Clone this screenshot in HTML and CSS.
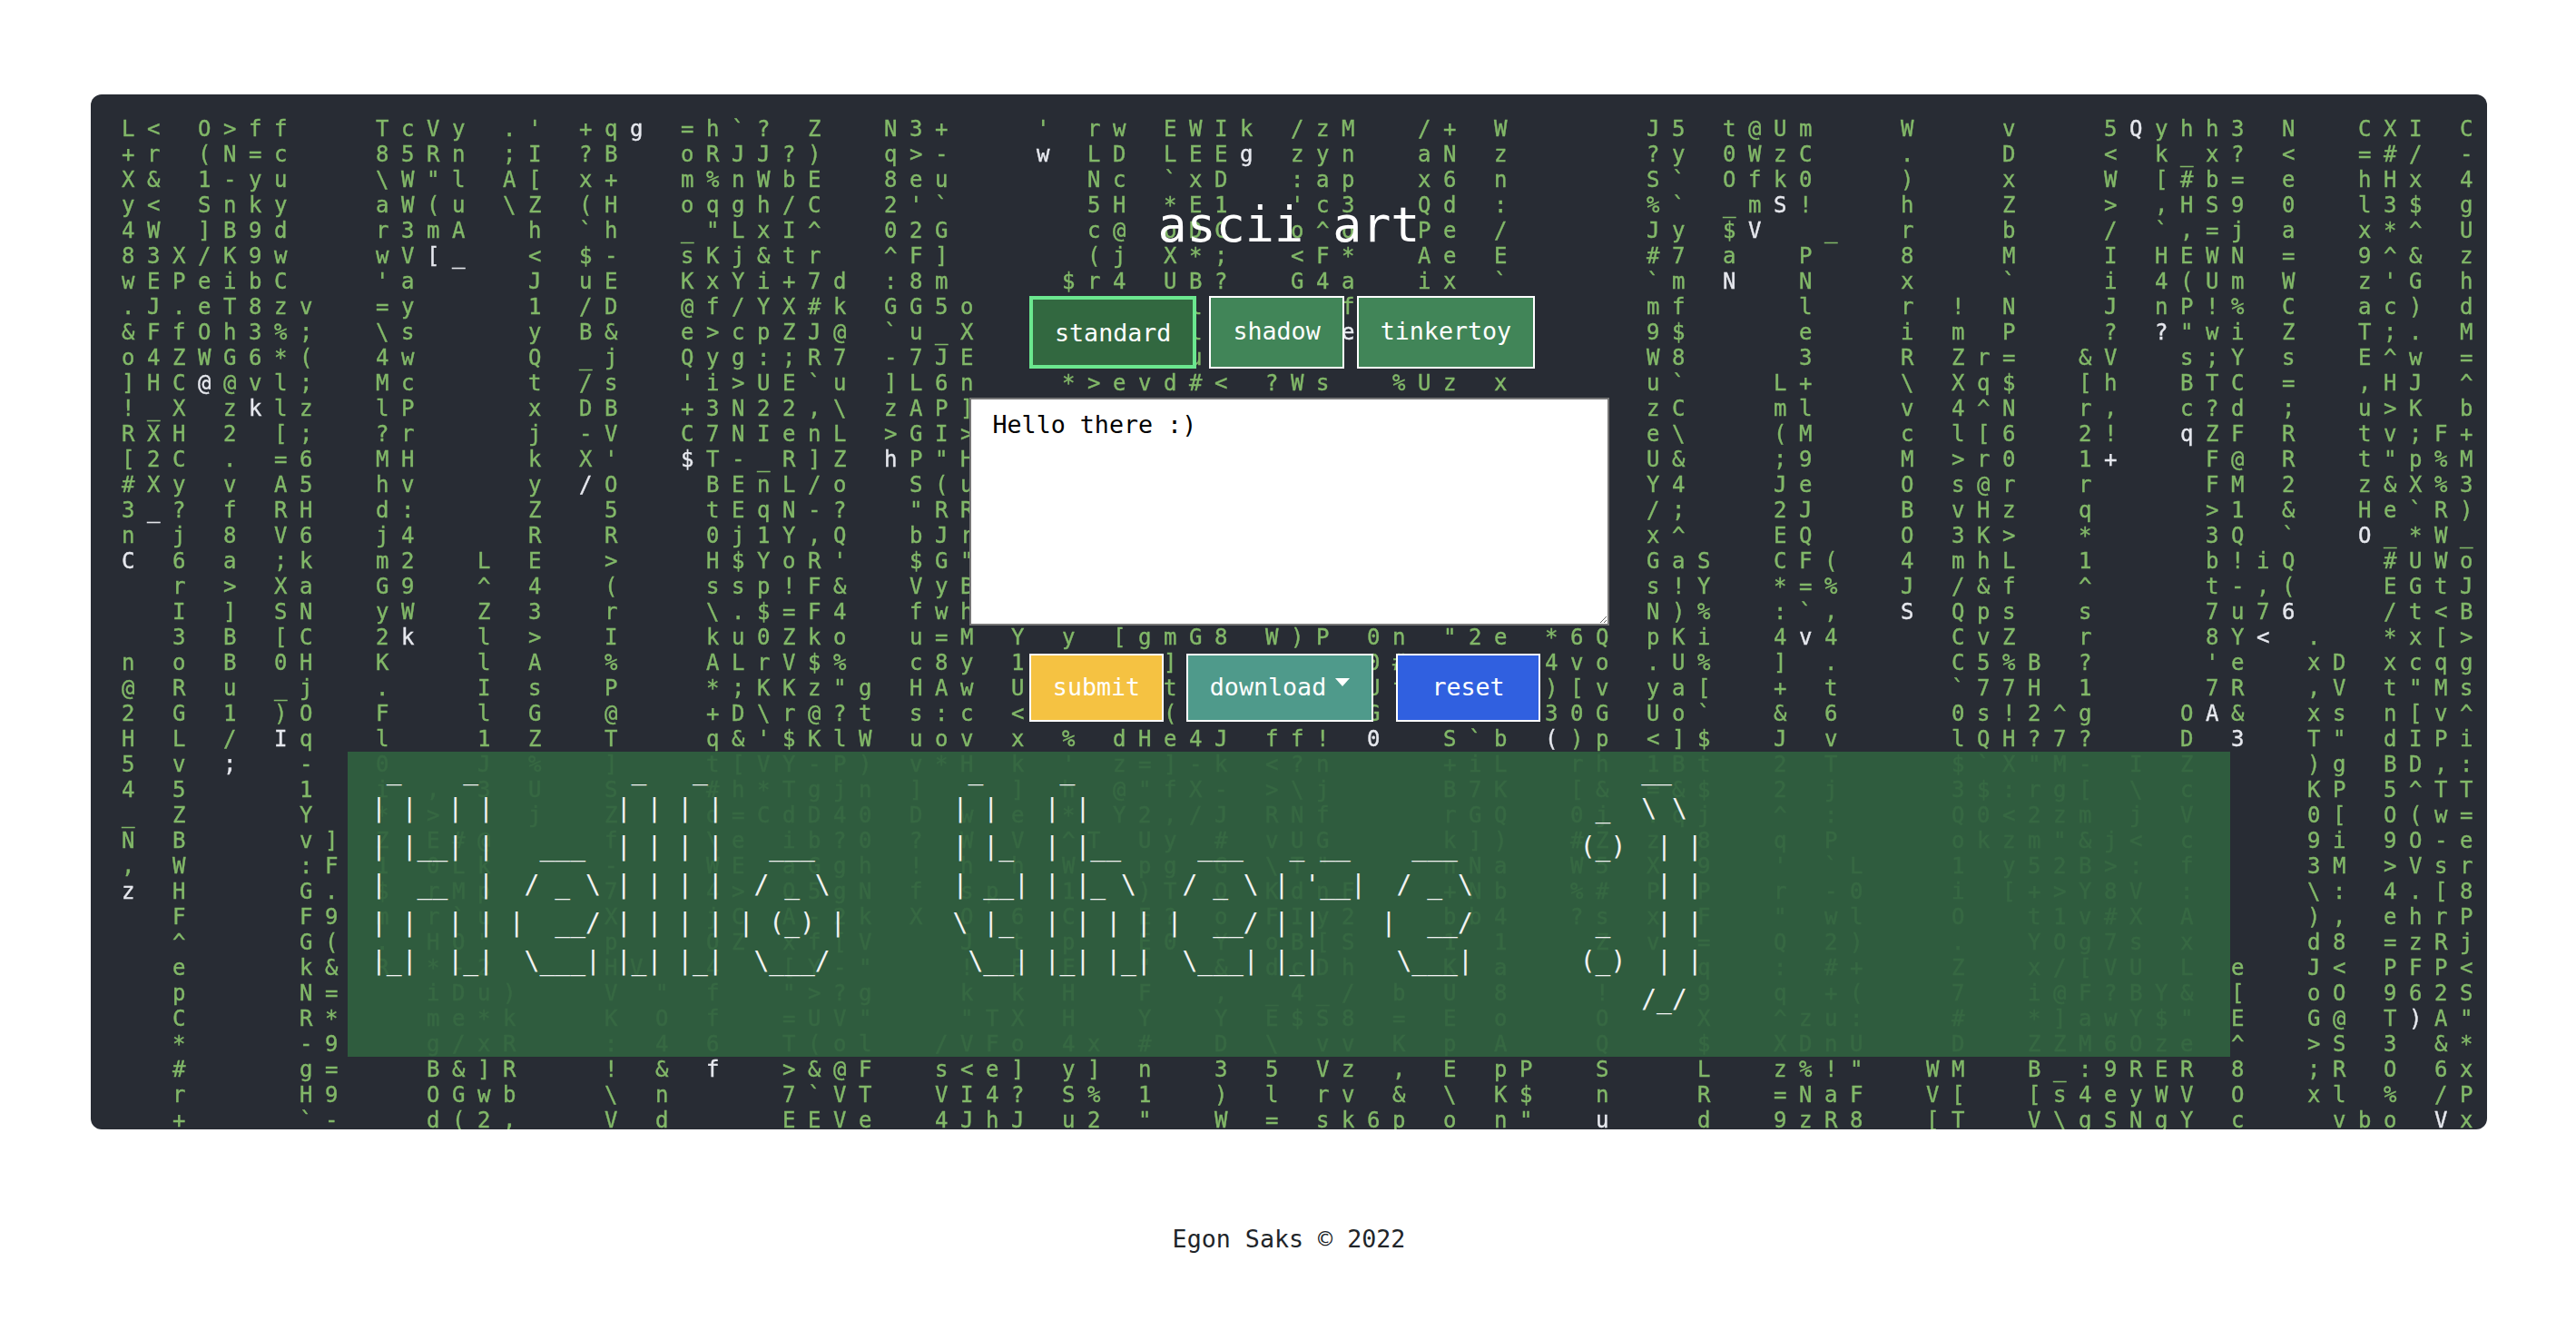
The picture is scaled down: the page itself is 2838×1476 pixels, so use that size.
FILE: index.html
```html
<!DOCTYPE html>
<html lang="en">
<head>
<meta charset="utf-8">
<title>ascii art</title>
<link rel="stylesheet" href="styles.css">
</head>
<body>
<main class="panel">
<pre class="rain" aria-hidden="true">L&lt; O&gt;ff   TcVy .' +q<i>g</i> =h`? Z  N3+   ' rw EWIk /zM  /+ W     J5 t@Um   W   v   5<i>Q</i>yhh3 N  CXI C
+r (N=c   85Rn ;I ?B  oRJJ?)  q&gt;-   <i>w</i> LD LEE<i>g</i> zyn  aN z     ?y 0WzC   .   D   &lt; k_x? &lt;  =#/ -
X&amp; 1-yu   \W"l A[ x+  m%nWbE  8eu     Nc `xD  :ap  x6 n     S` Ofk0   )   x   W [#b= e  hHx 4
y&lt; Snky   aW(u \Z (H  oqgh/C  2'`     5H *E1  'c3  Qd :     %` _m<i>S</i>!   h   Z   &gt; ,HS9 0  l3$ g
4W ]B9d   r3mA  h `h  _"LxI^  02G     c@ oDC  o^o  Pe /     Jy $<i>V</i>  _  r   b   / `,=j a  x*^ U
83X/K9w   wV<i>[_</i>  &lt; $-  sKj&amp;tr  ^F]     (j X*;  &lt;F*  Ae E     #7 a  P   8   M   I HEWN =  9^&amp; z
wEPeibC   'a    J uE  KxYi+7d :8m    $r4 UB?  G4a  ix `     `m <i>N</i>  N   x   `   i 4(Um W  z'G h
.J.eT8zv  =y    1 /D  @f/YX#k GG5o        l     f           mf    l   r ! N   J nP!% C  ac) d
&amp;FfOh3%;  \s    y B&amp;  e&gt;cpZJ@ `u_X        l     <i>e</i>           9$    e   i m P   ? <i>?</i>"wi Z  T;. M
o4ZWG6*(  4w    Q _j  Qyg:;R7 -7JE        u                 W8    3   R Zr=  &amp;V  s;Y s  E^w =
]HC<i>@</i>@vl;  Mc    t /s  'i&gt;UE`u ]L6n   *&gt;evd#&lt; ?Ws  %Uz x     u`   L+   \ Xq$  [h  BTC =  ,HJ ^
!_X z<i>k</i>lz  lP    x DB  +3N22,\ zAP]                          zC   ml   v 4^N  r,  c?d ;  u&gt;K b
RXH 2 [;  ?r    j -V  C7NIenL &gt;GI&gt;                          e\   (M   c l[6  2!  <i>q</i>ZF R  tv;F+
[2C . =6  MH    k X'  <i>$</i>T-_R]Z <i>h</i>P"H                          U&amp;   ;9   M &gt;r0  1<i>+</i>   F@ R  t"p%M
#Xy v A5  hv    y <i>/</i>O   BEnL/o  S(u                          Y4   Je   O s@r  r    FM 2  z&amp;X%3
3<i>_</i>? f RH  d:    Z  5   tEqN-?  "RR                          /;   2J   B vHz  q    &gt;1 &amp;  He`R)
n j 8 V6  j4    R  R   0j1Y,Q  bJr                          x^   EQ   O 3K&gt;  *    3Q `  <i>O</i>_*W_
<i>C</i> 6 a ;k  m2  L E  &gt;   H$YoR'  $G"                          GaS  CF(  4 mhL  1    b!iQ   #UWo
  r &gt; Xa  G9  ^ 4  (   ssp!F&amp;  VyB                          s!Y  *=%  J /&amp;f  ^    t-,(   EGtJ
  I ] SN  yW  Z 3  r   \.$=F4  fwh                          N)%  :`,  <i>S</i> Qps  s    7u7<i>6</i>   /t&lt;B
  3 B [C  2<i>k</i>  l &gt;  I   ku0Zko  u=M Y y [gmG8 W)P 0n "2e *6Q pKi  4<i>v</i>4    CvZ  r    8Y<i>&lt;</i> .  *x[&gt;
n o B 0H  K   l A  %   ALrV$%  c8y 1     ]       0#     4vo .U%  ] .    C5%B ?    'e  xD xcqg
@ R u _j  .   I s  P   *;KKz"g HAw U     t       Uf     )[v ya[  + t    `77H 1    7R  ,V t"Ms
2 G 1 )O  F   l G  @   +D\r@?t s:c &lt;     (       G      30G Uo`  &amp; 6    0s!2^g   O<i>A</i>&amp;  xs n[v^
H L / <i>I</i>q  l   1 Z  T   q&amp;'$KlW uov x % dHe4J ff! <i>0</i>  S`b <i>(</i>)p &lt;]$  J v    lQH?7?   D <i>3</i>  T" dIPi
5 v <i>;</i>  -  0   J %  ]   t[VY-P) v*H k ' z=]-k &lt;?n    +iL  rh 1Bt  2 T    $`X"M- I Z    )g BD,:
4 5    1  i , 3 U  S   #h*Tgjn ]   ] h @"fX- &gt;\j    B7K  [&amp; =&amp;$  2 j    3$:rg[ \ c    KP 5^TT
_ Z    Y  * &gt;   j  Z   d=CdD40 D w e * Y2,/J RNf    rGQ  0j .qj  ^ :    Q0&lt;2zm j V    0[ O(w=
N B    v] Z E#@    f   \e ib?0 ? W V ^T Uy # vUG    k])  #Z z 8  q P    okzm"&amp;j&lt; c    9i 9O-e
, W    :F 1 0Lk    -   WE aGgh ! h h W  pg G \T"    nNa  W5 X 9  ' `L   1 y52B&gt;: f    3M &gt;Vsr
<i>z</i> H    G. $ rMp    7   4&gt; O5gN f sp  1  )T Q KdnF   +Nb  %# P P  r -0   i [+&gt;Y8V :    \: 4.[8
  F    F9 m r`u    X   jC A-2k X O 6 C  E? o FIy2   bb4  ?s x F  " wl   O  t1v#X A    ), ehrP
  ^    G( . HO"    p   OZ xf[V   J t p  E0 Y oB[S   1 1   Z v =  Q 2)   .  YOg7s x    d8 =zRj
  e    k&amp; R *-2    HV  4  [Y-"   ! E F  "  &amp; dcDh   K a       q  : #+   Z  x/[VU L e  J&lt; PFP&lt;
  p    N=   iDu)   V " f  "&gt;?g   k k H  F  , _4_/ b U 8   !   9  q +(   7  i@F?BY&amp; [  oO 962S
  C    R*   me*k   K O f  =UV"   "TX H  Y  Y E$S8 = E o   O   X  ^zu:   #  *]awY$" E  G@ T<i>)</i>A"
  *    -9   g/xR   : 4 6  T(ol  /VFo 4x #  D \ vv K p A   Q   $  XDnU   D  ZZM6Oze ^  &gt;S 3 &amp;*
  #    g=   B&amp;]R   ! &amp; <i>f</i>  &gt;&amp;@F  s&lt;e] y] n  3 5 Vz , E pP  S   L  z%!"  WM  B_:9RER 8  ;R O 6x
  r    H9   OGwb   \ n    7`VT  VI4? S% 1  ) l rv &amp; \ K$  n   R  =NaF  V[  [s4eyWV O  xl % /P
  +    `-   d(2,   V d    EEVe  4JhJ u2 "  W = sk6p o n"  <i>u</i>   d  9zR8  [T  V\gSNgY c   vbo <i>V</i>x</pre>
<div class="stack">
<h1 class="title">ascii art</h1>
<div class="row row-fonts">
<button class="btn btn-font btn-on" type="button">standard</button>
<button class="btn btn-font" type="button">shadow</button>
<button class="btn btn-font" type="button">tinkertoy</button>
</div>
<textarea class="input" spellcheck="false">Hello there :)</textarea>
<div class="row row-actions">
<button class="btn btn-act btn-submit" type="button">submit</button>
<button class="btn btn-act btn-download" type="button">download<span class="caret"></span></button>
<button class="btn btn-act btn-reset" type="button">reset</button>
</div>
<pre class="art"> _    _          _   _                 _     _                                     __
| |  | |        | | | |               | |   | |                                 _  \ \
| |__| |   ___  | | | |   ___         | |_  | |__     ___   _ __    ___        (_)  | |
|  __  |  / _ \ | | | |  / _ \        | __| | |_ \   / _ \ | '__|  / _ \            | |
| |  | | |  __/ | | | | | (_) |       \ |_  | | | | |  __/ | |    |  __/        _   | |
|_|  |_|  \___| |_| |_|  \___/         \__| |_| |_|  \___| |_|     \___|       (_)  | |
                                                                                   /_/
</pre>
</div>
</main>
<footer class="credit">Egon Saks © 2022</footer>
</body>
</html>
```
FILE: styles.css
```css
* { box-sizing: border-box; }
html, body { margin: 0; background: #fff; }
body { font-family: "DejaVu Sans Mono", monospace; color: #212529; padding: 104px 98px 0 100px; }

.panel {
  position: relative;
  width: 2640px;
  height: 1140px;
  background: #282c34;
  border-radius: 12px;
  overflow: hidden;
}

.rain {
  position: absolute;
  left: 34px;
  top: 24px;
  margin: 0;
  font: 24px/28px "DejaVu Sans Mono", monospace;
  letter-spacing: 13.55px;
  color: #82b868;
  -webkit-text-stroke: 0.4px currentColor;
  filter: blur(0.75px);
  white-space: pre;
}
.rain i { font-style: normal; color: #e6e8ee; }

.stack {
  position: relative;
  display: flex;
  flex-direction: column;
  align-items: center;
  padding-top: 112px;
}

.title {
  margin: 0 0 46px;
  font-size: 53.33px;
  line-height: 64px;
  font-weight: 400;
  color: #fff;
}

.row { display: flex; width: 572px; }
.row-fonts { gap: 14px; margin-bottom: 32px; height: 80px; }
.row-actions { margin: 31px 0 33px; height: 75px; gap: 25px; }

.btn {
  margin: 0;
  padding: 0;
  border: 2px solid #fff;
  border-radius: 0;
  color: #fff;
  font: 26.67px/31px "DejaVu Sans Mono", monospace;
  background: #418558;
}
.btn-font { padding: 0 24px 4px; }
.btn-on { background: #326840; border: 4px solid #6be78f; padding: 0 24px; }

.btn-submit { width: 148px; background: #f5c242; padding-bottom: 2px; }
.btn-download { width: 206px; background: #4f9a8b; padding-bottom: 2px; }
.btn-reset { width: 159px; background: #3060e0; padding-bottom: 2px; }

.caret {
  display: inline-block;
  width: 0;
  height: 0;
  margin-left: 10px;
  vertical-align: 10px;
  border-top: 9px solid #fff;
  border-left: 8.5px solid transparent;
  border-right: 8.5px solid transparent;
}

.input {
  display: block;
  width: 705px;
  height: 251px;
  margin: 0;
  padding: 12px 24px;
  border: 2px solid #767676;
  border-radius: 0;
  background: #fff;
  color: #000;
  font: 26.67px/31px "DejaVu Sans Mono", monospace;
  outline: none;
}

.art {
  width: 2074px;
  height: 336px;
  margin: 0;
  padding-left: 26px;
  background: rgba(48, 97, 63, 0.92);
  color: #f2f2f2;
  font: 28px/42px "DejaVu Sans Mono", monospace;
  white-space: pre;
}

.credit {
  width: 2640px;
  margin-top: 101px;
  text-align: center;
  font-size: 26.67px;
  line-height: 40px;
}
```
